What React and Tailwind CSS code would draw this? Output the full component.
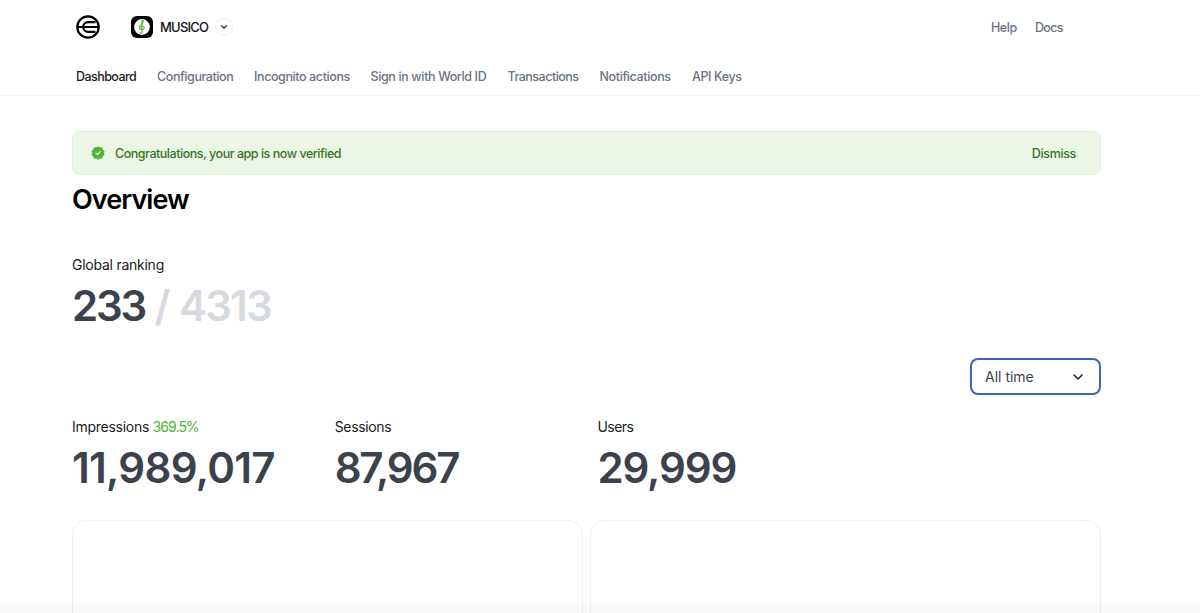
import React, { useState } from "react";
import { ChevronDown } from "lucide-react";

const tabs = [
  { label: "Dashboard", style: "w-[60px] tracking-[-0.55px]" },
  { label: "Configuration", style: "w-[76px] tracking-[-0.42px]" },
  { label: "Incognito actions", style: "w-[95.5px] tracking-[-0.4px]" },
  { label: "Sign in with World ID", style: "w-[116px] tracking-[-0.37px]" },
  { label: "Transactions", style: "w-[71px] tracking-[-0.5px]" },
  { label: "Notifications", style: "w-[71.5px] tracking-[-0.37px]" },
  { label: "API Keys", style: "w-[49px] tracking-[-0.4px]" },
];

const stats = [
  {
    label: "Impressions",
    change: "369.5%",
    value: "11,989,017",
    labelStyle: "tracking-[-0.27px]",
    valueStyle: "tracking-[-0.7px]",
  },
  {
    label: "Sessions",
    value: "87,967",
    labelStyle: "tracking-[-0.35px]",
    valueStyle: "tracking-[-2.2px]",
  },
  {
    label: "Users",
    value: "29,999",
    labelStyle: "tracking-[-0.5px]",
    valueStyle: "tracking-[-1.1px]",
  },
];

const WorldLogo = () => (
  <svg width="24" height="24" viewBox="0 0 24 24" fill="none" stroke="#000" strokeWidth="2.2">
    <circle cx="12" cy="12" r="10.7" />
    <path d="M1.5 12H22.5M19.5 7.2H12a4.8 4.8 0 0 0 0 9.6h7.5" />
  </svg>
);

const AppLogo = () => (
  <svg width="22" height="22" viewBox="0 0 22 22" fill="none">
    <rect width="22" height="22" rx="6" fill="#000" />
    <circle cx="11" cy="11" r="7.9" fill="#fff" />
    <path
      d="M11.2 15.8 10.6 6.5c0-1.6.5-2.5 1.1-2.5.8 0 1 2-.4 3.4L9.6 9.2c-2.4 2.2-1.1 4.7 1.4 4.7 2.8 0 2.8-3.9.4-3.9-1.7 0-2 2.1-.8 2.6M11.2 15.2c.2 2.3-1.9 2.7-2.2 1.3"
      stroke="#62bf3c"
      strokeWidth="1.15"
      strokeLinecap="round"
    />
  </svg>
);

const VerifiedBadge = () => (
  <svg width="14" height="14" viewBox="0 0 14 14" fill="none">
    <path
      d="M7 .5 8.7 1.8 10.8 1.7 11.5 3.7 13.2 5 12.6 7 13.2 9 11.5 10.3 10.8 12.3 8.7 12.2 7 13.5 5.3 12.2 3.2 12.3 2.5 10.3.8 9 1.4 7 .8 5 2.5 3.7 3.2 1.7 5.3 1.8Z"
      fill="#4db52f"
      stroke="#4db52f"
      strokeWidth=".6"
      strokeLinejoin="round"
    />
    <path d="m4.9 7.2 1.5 1.4 2.8-3" stroke="#fff" strokeWidth="1.1" strokeLinecap="round" />
  </svg>
);

const Header = () => (
  <header className="h-24 border-b border-[#f3f4f5] pl-[76px]">
    <div className="flex h-[54px] items-center">
      <WorldLogo />
      <div className="ml-[31px] flex items-center">
        <AppLogo />
        <span className="ml-[7px] w-[49px] whitespace-nowrap pt-px text-[13px] font-medium tracking-[-0.8px] text-[#111418]">
          MUSICO
        </span>
        <button className="ml-[6px] flex h-[18px] w-[18px] items-center justify-center rounded-full border border-[#eeeff1]">
          <ChevronDown className="h-[10px] w-[10px] text-[#24292f]" strokeWidth={2.6} />
        </button>
      </div>
      <div className="ml-auto mr-[137px] flex gap-[18px] pt-0.5 text-[12.5px] font-[450] text-[#6b7280]">
        <a className="tracking-[-0.4px]">Help</a>
        <a className="tracking-[-0.6px]">Docs</a>
      </div>
    </div>
    <nav className="flex gap-[21px] pt-[14px]">
      {tabs.map((tab, i) => (
        <a
          key={tab.label}
          className={`whitespace-nowrap text-[12.5px] leading-[18px] ${tab.style} ${
            i === 0 ? "font-medium text-[#191c20]" : "font-[450] text-[#6b7280]"
          }`}
        >
          {tab.label}
        </a>
      ))}
    </nav>
  </header>
);

const Notice = ({ onDismiss }) => (
  <div className="flex h-11 items-center rounded-[7px] border border-[#e6ece4] bg-[#ebf6e7] pl-[18px] pr-6 text-[12.5px] font-[450] text-[#35761f]">
    <VerifiedBadge />
    <span className="ml-[10px] pt-0.5 tracking-[-0.47px]">
      Congratulations, your app is now verified
    </span>
    <button className="ml-auto pt-0.5 tracking-[-0.35px]" onClick={onDismiss}>
      Dismiss
    </button>
  </div>
);

const App = () => {
  const [showNotice, setShowNotice] = useState(true);

  return (
    <div className="relative h-[613px] overflow-hidden bg-white font-['Inter',sans-serif]">
      <Header />
      <main className="ml-[72px] w-[1029px] pt-[35px]">
        {showNotice && <Notice onDismiss={() => setShowNotice(false)} />}
        <h1 className="mt-2 text-[27px] font-semibold leading-[34px] tracking-[-0.95px] text-black">
          Overview
        </h1>

        <section className="mt-[38px]">
          <p className="text-sm leading-5 tracking-[-0.25px] text-[#191c20]">Global ranking</p>
          <p className="mt-[5px] flex text-[42px] font-semibold leading-[52px] text-[#3c424b]">
            <span className="w-[82.5px] tracking-[-2.2px]">233</span>
            <span className="w-[24.5px] text-[#d6d9dd]">/</span>
            <span className="tracking-[-1.8px] text-[#d6d9dd]">4313</span>
          </p>
        </section>

        <div className="mt-[26px] flex justify-end">
          <button className="flex h-[37px] w-[131px] items-center justify-between rounded-[8px] border-2 border-[#3b66bd] pl-[13px] pr-[13px] text-sm text-[#3c424b]">
            All time
            <ChevronDown className="h-4 w-4 text-[#191c20]" strokeWidth={2.2} />
          </button>
        </div>

        <section className="mt-[22px] flex">
          {stats.map((stat) => (
            <div key={stat.label} className="w-[262.7px]">
              <p className={`whitespace-nowrap text-sm leading-5 text-[#191c20] ${stat.labelStyle}`}>
                {stat.label}
                {stat.change && (
                  <span className="ml-[3.5px] tracking-[-0.9px] text-[#4db52f]">{stat.change}</span>
                )}
              </p>
              <p
                className={`mt-[5px] whitespace-nowrap text-[42px] font-semibold leading-[52px] text-[#3c424b] ${stat.valueStyle}`}
              >
                {stat.value}
              </p>
            </div>
          ))}
        </section>

        <section className="mt-[26px] grid grid-cols-2 gap-[7px]">
          <div className="h-[240px] rounded-[14px] border border-[#f0f1f3]" />
          <div className="h-[240px] rounded-[14px] border border-[#f0f1f3]" />
        </section>
      </main>
      <div className="absolute inset-x-0 bottom-0 h-4 bg-linear-to-t from-black/3 to-transparent" />
    </div>
  );
};

export default App;
